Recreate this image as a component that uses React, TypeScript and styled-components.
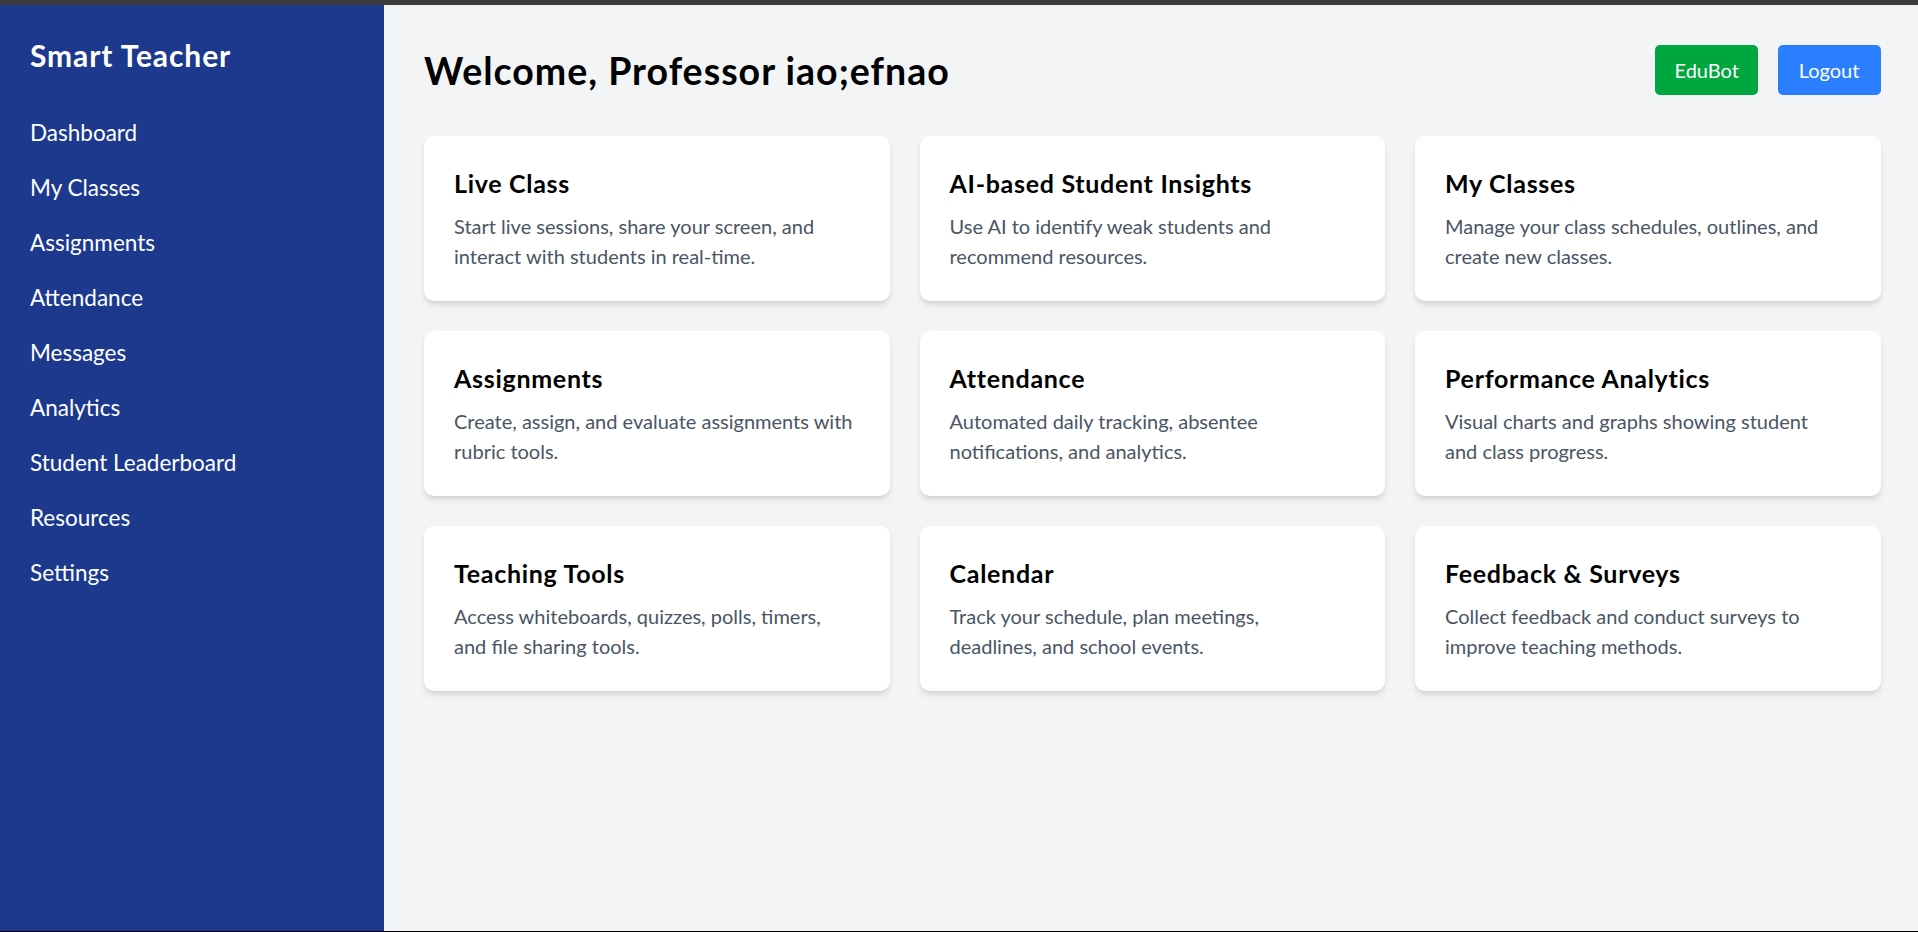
import React from "react";
import styled, { createGlobalStyle } from "styled-components";

const GlobalStyle = createGlobalStyle`
  * { box-sizing: border-box; }
  html, body { margin: 0; padding: 0; }
  body {
    font-family: Lato, "Noto Sans", "Liberation Sans", sans-serif;
    background: #f3f4f6;
    color: #000;
  }
`;

const Frame = styled.div`
  display: flex;
  flex-direction: column;
  height: 100vh;
  border-top: 5px solid #3b3b3b;
  border-bottom: 1px solid #000;
`;

const Layout = styled.div`
  flex: 1;
  display: flex;
  min-height: 0;
`;

const Sidebar = styled.aside`
  width: 384px;
  flex-shrink: 0;
  background: #1c398e;
  color: #fff;
  padding: 30px;
`;

const Brand = styled.h2`
  margin: 0 0 40px;
  font-size: 30px;
  line-height: 40px;
  font-weight: 700;
  letter-spacing: 0.03em;
`;

const Nav = styled.ul`
  list-style: none;
  margin: 0;
  padding: 0;
  display: flex;
  flex-direction: column;
  gap: 20px;
`;

const NavItem = styled.li`
  font-size: 22.5px;
  line-height: 35px;
  cursor: pointer;
`;

const Main = styled.main`
  flex: 1;
  padding: 40px 37.5px 40px 40px;
`;

const Header = styled.header`
  display: flex;
  justify-content: space-between;
  align-items: center;
  margin-bottom: 41px;
`;

const Heading = styled.h1`
  margin: 0;
  font-size: 37.5px;
  line-height: 45px;
  font-weight: 700;
  letter-spacing: 0.027em;
`;

const Actions = styled.div`
  display: flex;
  gap: 20px;
`;

const Button = styled.button<{ $bg: string }>`
  border: none;
  border-radius: 5px;
  background: ${(p) => p.$bg};
  color: #fff;
  font-family: inherit;
  font-size: 20px;
  line-height: 30px;
  padding: 10px 20px;
  width: 103px;
  cursor: pointer;
`;

const Grid = styled.div`
  display: grid;
  grid-template-columns: repeat(3, 1fr);
  gap: 30px;
`;

const Card = styled.div`
  background: #fff;
  border-radius: 10px;
  padding: 30px;
  box-shadow: 0 5px 7.5px -1.25px rgba(0, 0, 0, 0.1),
    0 2.5px 5px -2.5px rgba(0, 0, 0, 0.1);
`;

const CardTitle = styled.h3`
  margin: 0;
  font-size: 25px;
  line-height: 35px;
  font-weight: 700;
  letter-spacing: 0.028em;
`;

const CardText = styled.p`
  margin: 10px 0 0;
  font-size: 20px;
  line-height: 30px;
  color: #4a5565;
`;

const Line = styled.span`
  display: block;
  white-space: nowrap;
`;

const navItems = [
  "Dashboard",
  "My Classes",
  "Assignments",
  "Attendance",
  "Messages",
  "Analytics",
  "Student Leaderboard",
  "Resources",
  "Settings",
];

const cards: { title: string; lines: string[] }[] = [
  { title: "Live Class", lines: ["Start live sessions, share your screen, and", "interact with students in real-time."] },
  { title: "AI-based Student Insights", lines: ["Use AI to identify weak students and", "recommend resources."] },
  { title: "My Classes", lines: ["Manage your class schedules, outlines, and", "create new classes."] },
  { title: "Assignments", lines: ["Create, assign, and evaluate assignments with", "rubric tools."] },
  { title: "Attendance", lines: ["Automated daily tracking, absentee", "notifications, and analytics."] },
  { title: "Performance Analytics", lines: ["Visual charts and graphs showing student", "and class progress."] },
  { title: "Teaching Tools", lines: ["Access whiteboards, quizzes, polls, timers,", "and file sharing tools."] },
  { title: "Calendar", lines: ["Track your schedule, plan meetings,", "deadlines, and school events."] },
  { title: "Feedback & Surveys", lines: ["Collect feedback and conduct surveys to", "improve teaching methods."] },
];

export default function App() {
  return (
    <>
      <GlobalStyle />
      <Frame>
        <Layout>
          <Sidebar>
            <Brand>Smart Teacher</Brand>
            <Nav>
              {navItems.map((n) => (
                <NavItem key={n}>{n}</NavItem>
              ))}
            </Nav>
          </Sidebar>
          <Main>
            <Header>
              <Heading>Welcome, Professor iao;efnao</Heading>
              <Actions>
                <Button $bg="#00a63e">EduBot</Button>
                <Button $bg="#2b7fff">Logout</Button>
              </Actions>
            </Header>
            <Grid>
              {cards.map((c) => (
                <Card key={c.title}>
                  <CardTitle>{c.title}</CardTitle>
                  <CardText>
                    {c.lines.map((l) => (
                      <Line key={l}>{l}</Line>
                    ))}
                  </CardText>
                </Card>
              ))}
            </Grid>
          </Main>
        </Layout>
      </Frame>
    </>
  );
}
